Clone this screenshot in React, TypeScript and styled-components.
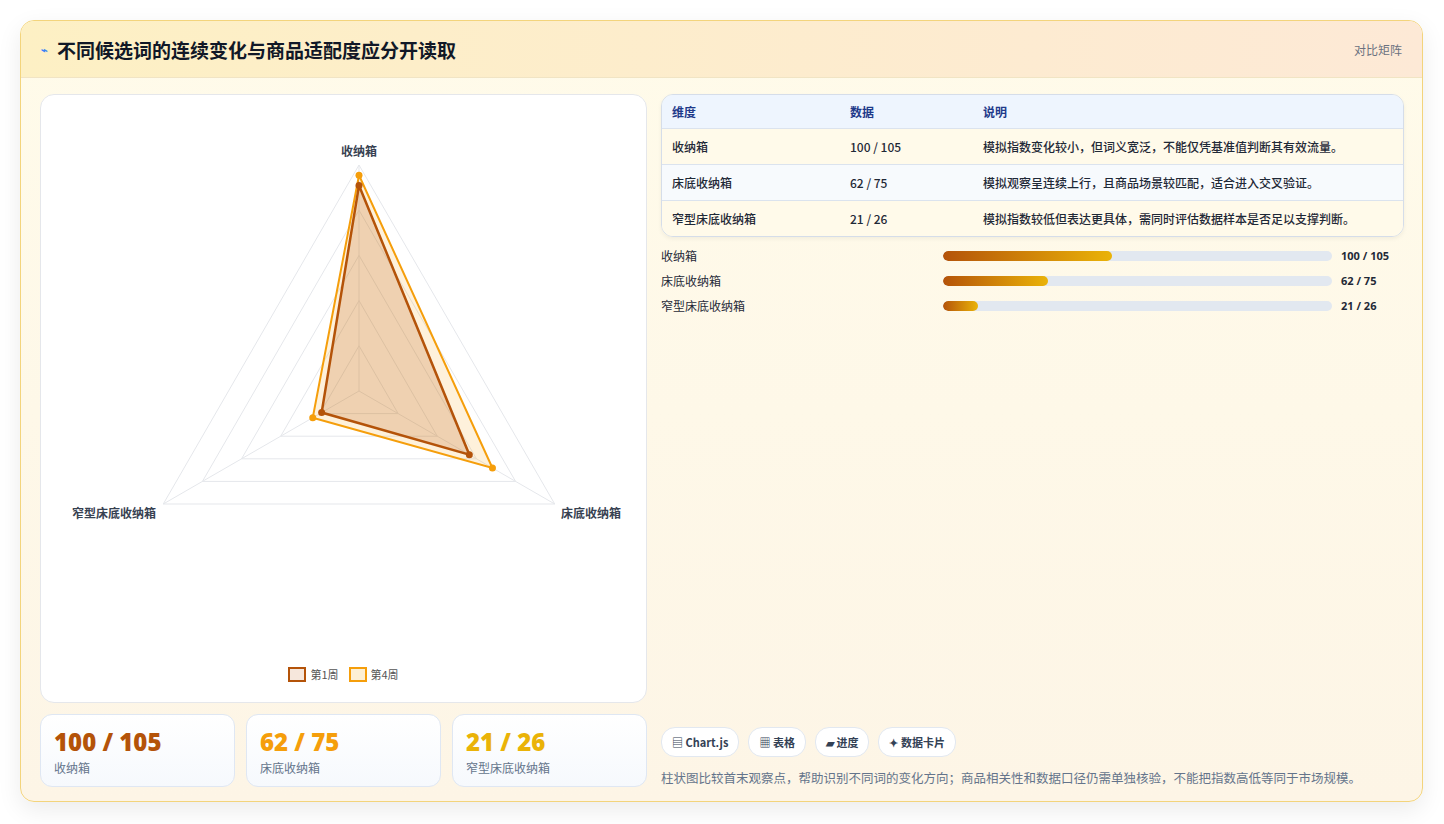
import React from "react";
import styled, { createGlobalStyle } from "styled-components";

const G = createGlobalStyle`
  body { margin:0; background:#f3f4f6; font-family: "Noto Sans CJK SC","Noto Sans",sans-serif; }
`;
const Page = styled.div`padding:20px 21px 22px 20px; background:#fff; height:824px; box-sizing:border-box;`;
const Card = styled.div`
  height:782px; box-sizing:border-box; border:1px solid #f3d47c; border-radius:14px; overflow:hidden;
  background:linear-gradient(180deg,#fffbea,#fdf5e6); box-shadow:0 8px 24px rgba(0,0,0,.08);
  display:flex; flex-direction:column;`;
const Header = styled.div`
  height:56px; flex:none; display:flex; align-items:center; justify-content:space-between; padding:0 20px;
  background:linear-gradient(90deg,#fdf0c4,#fde9d6); border-bottom:1px solid #f1e4c4;`;
const Title = styled.h1`margin:0; font-size:19px; font-weight:700; color:#111827; display:flex; align-items:center; gap:9px;`;
const Bolt = styled.span`color:#3b82f6; font-size:11px;`;
const Tag = styled.span`font-size:12px; color:#6b7280;`;
const Body = styled.div`flex:1; display:grid; grid-template-columns:607px 1fr; gap:14px; padding:16px 18px 18px 19px;`;
const Left = styled.div`display:flex; flex-direction:column; gap:11px;`;
const ChartPanel = styled.div`height:607px; background:#fff; border:1px solid #e5e7eb; border-radius:14px; position:relative;`;
const Stats = styled.div`display:grid; grid-template-columns:repeat(3,1fr); gap:11px;`;
const Stat = styled.div`height:73px; box-sizing:border-box; border:1px solid #dfe7f3; border-radius:12px; background:linear-gradient(180deg,#fff,#f6f9fd); padding:12px 13px;`;
const StatNum = styled.div<{c:string}>`font-size:24px; font-weight:800; color:${p=>p.c}; font-family:"Open Sans","Noto Sans CJK SC",sans-serif; line-height:30px;`;
const StatLbl = styled.div`font-size:12px; color:#64748b; margin-top:2px;`;
const Right = styled.div`display:flex; flex-direction:column;`;
const Table = styled.div`border:1px solid #d5dde9; border-radius:12px; overflow:hidden; box-shadow:0 2px 4px rgba(0,0,0,.05);`;
const Row = styled.div<{h?:boolean; alt?:boolean}>`
  display:grid; grid-template-columns:178px 133px 1fr; padding-left:10px; align-items:center;
  height:${p=>p.h?33:35}px; font-size:12px; font-weight:${p=>p.h?600:500};
  color:${p=>p.h?"#1e3a8a":"#1f2937"};
  background:${p=>p.h?"#eef5fe":p.alt?"#f7fafd":"#fffaea"};
  border-top:${p=>p.h?"none":"1px solid #dbe3ee"};`;
const Bars = styled.div`display:flex; flex-direction:column; gap:10px; margin-top:10px;`;
const BarRow = styled.div`display:grid; grid-template-columns:282px 389px 1fr; align-items:center; gap:0; font-size:12px; color:#1f2937; height:15px;`;
const Track = styled.div`height:10px; background:#e2e8f0; border-radius:5px; overflow:hidden;`;
const Fill = styled.div`height:100%; border-radius:5px; background:linear-gradient(90deg,#b45309,#eab308);`;
const Val = styled.span`padding-left:9px; font-weight:700; font-size:11px; font-family:"Open Sans",sans-serif;`;
const Spacer = styled.div`flex:1;`;
const Chips = styled.div`display:flex; gap:9px;`;
const Chip = styled.span`height:28px; padding:0 10px; border:1px solid #e2e8f0; border-radius:14px; background:#fff; display:flex; align-items:center; gap:4px; font-size:11px; font-weight:600; color:#334155;`;
const Note = styled.p`margin:11px 0 0; font-size:12.5px; color:#64748b;`;
const Legend = styled.div`position:absolute; bottom:20px; left:0; right:0; display:flex; justify-content:center; gap:10px; font-size:11px; color:#555;`;
const LItem = styled.span`display:flex; align-items:center; gap:4px;`;
const Swatch = styled.span<{b:string;f:string}>`width:14px; height:11px; border:2.5px solid ${p=>p.b}; background:${p=>p.f};`;

const cx=318, cy=296, R=226, MAX=110;
const ang=[-90,30,150].map(a=>a*Math.PI/180);
const pt=(v:number,i:number)=>[cx+Math.cos(ang[i])*R*v/MAX, cy+Math.sin(ang[i])*R*v/MAX];
const poly=(vals:number[])=>vals.map((v,i)=>pt(v,i).join(",")).join(" ");

function Radar(){
  const w1=[100,62,21], w4=[105,75,26];
  return (
    <svg width="607" height="607" style={{position:"absolute",left:0,top:0}}>
      {[22,44,66,88,110].map(v=><polygon key={v} points={poly([v,v,v])} fill="none" stroke="#e5e7eb"/>)}
      {[0,1,2].map(i=>{const [x,y]=pt(110,i);return <line key={i} x1={cx} y1={cy} x2={x} y2={y} stroke="#e5e7eb"/>})}
      <polygon points={poly(w4)} fill="rgba(245,158,11,0.15)" stroke="#f59e0b" strokeWidth="2"/>
      <polygon points={poly(w1)} fill="rgba(180,83,9,0.2)" stroke="#b45309" strokeWidth="2.5"/>
      {w4.map((v,i)=>{const [x,y]=pt(v,i);return <circle key={"a"+i} cx={x} cy={y} r="3.5" fill="#f59e0b"/>})}
      {w1.map((v,i)=>{const [x,y]=pt(v,i);return <circle key={"b"+i} cx={x} cy={y} r="3.5" fill="#b45309"/>})}
      <g fontSize="12" fontWeight="600" fill="#374151" fontFamily="Noto Sans CJK SC,sans-serif">
        <text x={cx} y={61} textAnchor="middle">收纳箱</text>
        <text x={550} y={423} textAnchor="middle">床底收纳箱</text>
        <text x={73} y={423} textAnchor="middle">窄型床底收纳箱</text>
      </g>
    </svg>
  );
}

const rows=[["收纳箱","100 / 105","模拟指数变化较小，但词义宽泛，不能仅凭基准值判断其有效流量。"],
["床底收纳箱","62 / 75","模拟观察呈连续上行，且商品场景较匹配，适合进入交叉验证。"],
["窄型床底收纳箱","21 / 26","模拟指数较低但表达更具体，需同时评估数据样本是否足以支撑判断。"]];
const bars=[["收纳箱",43.5,"100 / 105"],["床底收纳箱",27,"62 / 75"],["窄型床底收纳箱",9,"21 / 26"]] as const;

export default function App(){
  return (<Page><G/><Card>
    <Header><Title><Bolt>⌁</Bolt>不同候选词的连续变化与商品适配度应分开读取</Title><Tag>对比矩阵</Tag></Header>
    <Body>
      <Left>
        <ChartPanel><Radar/>
          <Legend><LItem><Swatch b="#b45309" f="#f6e7dc"/>第1周</LItem><LItem><Swatch b="#f59e0b" f="#fdf0d5"/>第4周</LItem></Legend>
        </ChartPanel>
        <Stats>
          <Stat><StatNum c="#b45309">100 / 105</StatNum><StatLbl>收纳箱</StatLbl></Stat>
          <Stat><StatNum c="#f59e0b">62 / 75</StatNum><StatLbl>床底收纳箱</StatLbl></Stat>
          <Stat><StatNum c="#eab308">21 / 26</StatNum><StatLbl>窄型床底收纳箱</StatLbl></Stat>
        </Stats>
      </Left>
      <Right>
        <Table>
          <Row h><span>维度</span><span>数据</span><span>说明</span></Row>
          {rows.map((r,i)=><Row key={i} alt={i===1}><span>{r[0]}</span><span>{r[1]}</span><span>{r[2]}</span></Row>)}
        </Table>
        <Bars>{bars.map(b=><BarRow key={b[0]}><span>{b[0]}</span><Track><Fill style={{width:b[1]+"%"}}/></Track><Val>{b[2]}</Val></BarRow>)}</Bars>
        <Spacer/>
        <Chips><Chip>▤ Chart.js</Chip><Chip>▦ 表格</Chip><Chip>▰ 进度</Chip><Chip>✦ 数据卡片</Chip></Chips>
        <Note>柱状图比较首末观察点，帮助识别不同词的变化方向；商品相关性和数据口径仍需单独核验，不能把指数高低等同于市场规模。</Note>
      </Right>
    </Body>
  </Card></Page>);
}
